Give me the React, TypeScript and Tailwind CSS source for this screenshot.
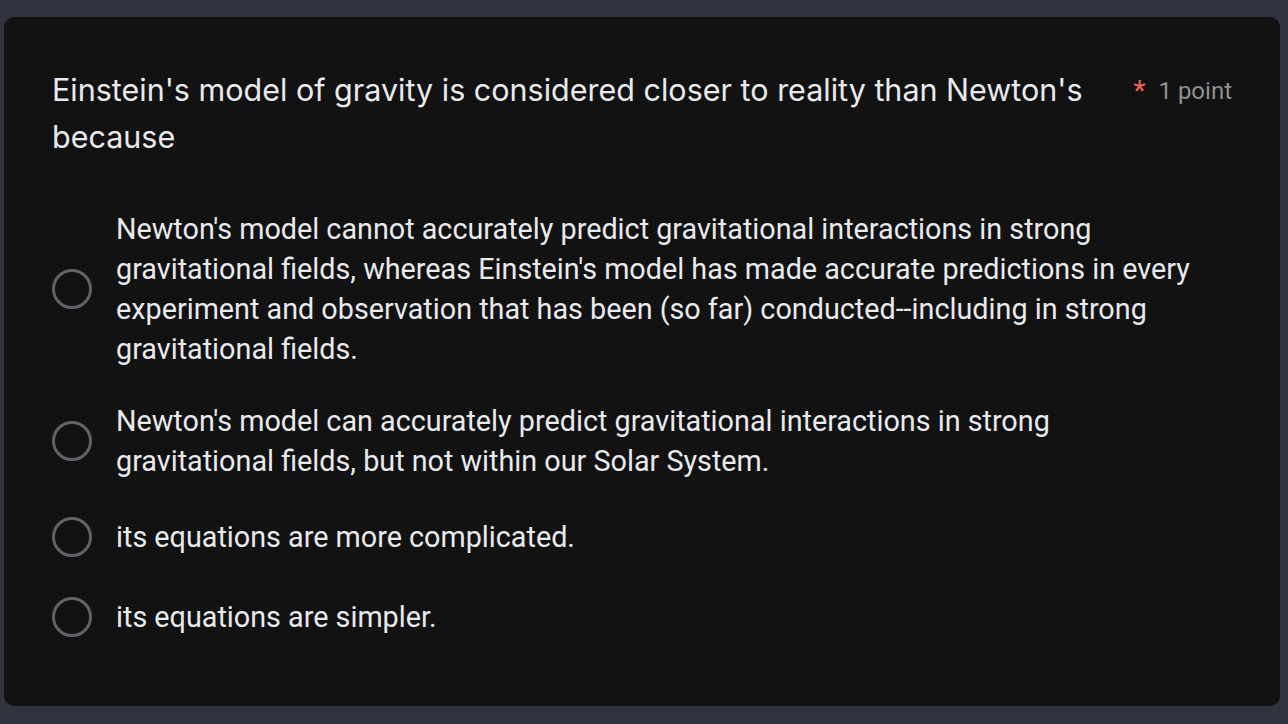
import React from 'react';

const options = [
  "Newton's model cannot accurately predict gravitational interactions in strong gravitational fields, whereas Einstein's model has made accurate predictions in every experiment and observation that has been (so far) conducted--including in strong gravitational fields.",
  "Newton's model can accurately predict gravitational interactions in strong gravitational fields, but not within our Solar System.",
  'its equations are more complicated.',
  'its equations are simpler.',
];

const Radio = () => (
  <div className="w-[40px] h-[40px] shrink-0 rounded-full border-[3px] border-[#5f6368]" />
);

export default function App() {
  return (
    <div className="min-h-screen w-full bg-[#31333f] pl-[4px] pr-[8px] pt-[17px]">
      <div className="w-[1276px] h-[689px] rounded-[10px] bg-[#121212] pl-[48px] pr-[48px] pt-[49px]">
        <div className="flex items-start">
          <h1
            className="flex-1 text-[30.5px] leading-[47px] text-[#e8eaed] font-normal pr-[36px]"
            style={{ fontFamily: 'Inter, "Open Sans", sans-serif' }}
          >
            Einstein's model of gravity is considered closer to reality than Newton's because
          </h1>
          <div
            className="flex items-start pt-[11px] shrink-0"
            style={{ fontFamily: 'Roboto, "Liberation Sans", sans-serif' }}
          >
            <span className="text-[28px] leading-[28px] text-[#ee675c] mr-[13px]">*</span>
            <span className="text-[24px] leading-[28px] text-[#909090]">1 point</span>
          </div>
        </div>

        <div
          className="mt-[49px] flex flex-col gap-[32px]"
          style={{ fontFamily: 'Roboto, "Liberation Sans", sans-serif' }}
        >
          {options.map((opt, i) => (
            <div key={i} className="flex items-center min-h-[48px]">
              <Radio />
              <div className="ml-[24px] max-w-[1090px] text-[28.75px] leading-[40px] text-[#e8eaed]">
                {opt}
              </div>
            </div>
          ))}
        </div>
      </div>
    </div>
  );
}
